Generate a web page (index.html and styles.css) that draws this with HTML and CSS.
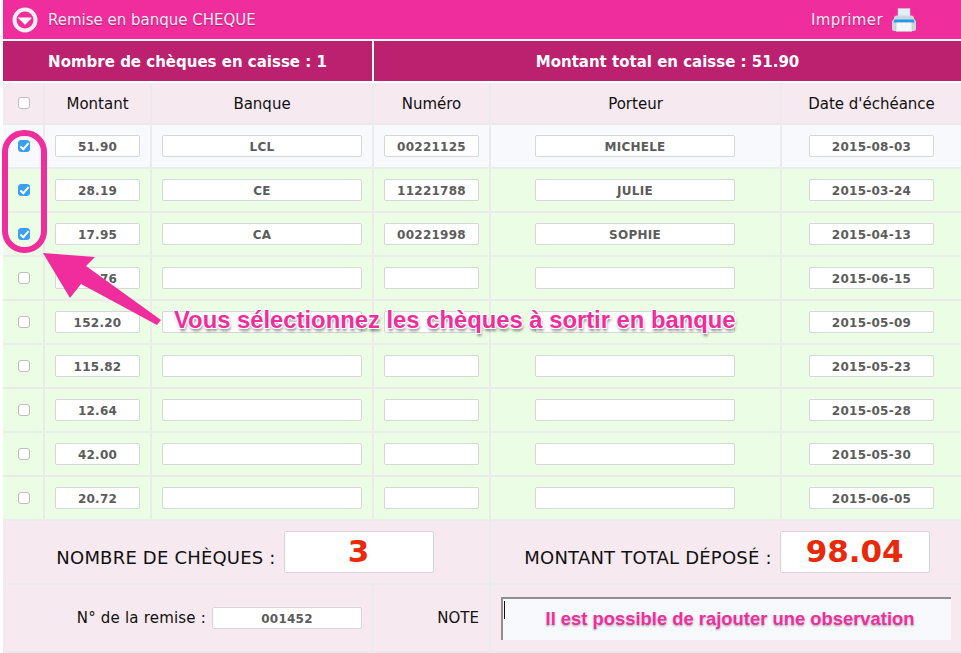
FILE: index.html
```html
<!DOCTYPE html>
<html lang="fr">
<head>
<meta charset="utf-8">
<title>Remise en banque CHEQUE</title>
<link rel="stylesheet" href="styles.css">
</head>
<body>
<div class="page">
  <header class="topbar">
    <div class="title-group">
      <svg class="round-icon" width="26" height="26" viewBox="0 0 26 26"><circle cx="13" cy="13" r="10.5" fill="#f02d9c" stroke="#f6eef2" stroke-width="4"/><path d="M7 10.5h12a.6.6 0 0 1 .4 1l-6 6a.6.6 0 0 1-.8 0l-6-6a.6.6 0 0 1-.4-1z" fill="#fff"/></svg>
      <span class="title">Remise en banque CHEQUE</span>
    </div>
    <div class="print-group">
      <span class="title print-label">Imprimer</span>
      <svg class="printer" width="26" height="26" viewBox="0 0 26 26">
        <path d="M7 1.500h12v10H7z" fill="#e4eef7" stroke="#b9c9d8" stroke-width=".6"/>
        <path d="M3 11.500q0-3 3-3h14q3 0 3 3l2 3v7q0 2.500-2.500 2.500h-19Q1 24 1 21.500v-7z" fill="#ccd6e0"/>
        <path d="M3.500 12.500h19l1 3h-21z" fill="#1e9bea"/>
        <path d="M5 15.500h16v9H5z" fill="#f4f7fa" stroke="#aebccb" stroke-width=".5"/>
      </svg>
    </div>
  </header>

  <div class="band">
    <div class="band-cell">Nombre de chèques en caisse : 1</div>
    <div class="band-cell">Montant total en caisse : 51.90</div>
  </div>

  <div class="sheet">
    <div class="cell head"><input class="check" type="checkbox"></div>
    <div class="cell head">Montant</div>
    <div class="cell head">Banque</div>
    <div class="cell head">Numéro</div>
    <div class="cell head">Porteur</div>
    <div class="cell head">Date d'échéance</div>

    <div class="cell first"><input class="check" type="checkbox" checked></div>
    <div class="cell first"><input class="field w85" readonly value="51.90"></div>
    <div class="cell first"><input class="field w200" readonly value="LCL"></div>
    <div class="cell first"><input class="field w95" readonly value="00221125"></div>
    <div class="cell first"><input class="field w200 porteur" readonly value="MICHELE"></div>
    <div class="cell first"><input class="field w125" readonly value="2015-08-03"></div>

    <div class="cell"><input class="check" type="checkbox" checked></div>
    <div class="cell"><input class="field w85" readonly value="28.19"></div>
    <div class="cell"><input class="field w200" readonly value="CE"></div>
    <div class="cell"><input class="field w95" readonly value="11221788"></div>
    <div class="cell"><input class="field w200 porteur" readonly value="JULIE"></div>
    <div class="cell"><input class="field w125" readonly value="2015-03-24"></div>

    <div class="cell"><input class="check" type="checkbox" checked></div>
    <div class="cell"><input class="field w85" readonly value="17.95"></div>
    <div class="cell"><input class="field w200" readonly value="CA"></div>
    <div class="cell"><input class="field w95" readonly value="00221998"></div>
    <div class="cell"><input class="field w200 porteur" readonly value="SOPHIE"></div>
    <div class="cell"><input class="field w125" readonly value="2015-04-13"></div>

    <div class="cell"><input class="check" type="checkbox"></div>
    <div class="cell"><input class="field w85" readonly value="24.76"></div>
    <div class="cell"><input class="field w200" readonly></div>
    <div class="cell"><input class="field w95" readonly></div>
    <div class="cell"><input class="field w200 porteur" readonly></div>
    <div class="cell"><input class="field w125" readonly value="2015-06-15"></div>

    <div class="cell"><input class="check" type="checkbox"></div>
    <div class="cell"><input class="field w85" readonly value="152.20"></div>
    <div class="cell"><input class="field w200" readonly></div>
    <div class="cell"><input class="field w95" readonly></div>
    <div class="cell"><input class="field w200 porteur" readonly></div>
    <div class="cell"><input class="field w125" readonly value="2015-05-09"></div>

    <div class="cell"><input class="check" type="checkbox"></div>
    <div class="cell"><input class="field w85" readonly value="115.82"></div>
    <div class="cell"><input class="field w200" readonly></div>
    <div class="cell"><input class="field w95" readonly></div>
    <div class="cell"><input class="field w200 porteur" readonly></div>
    <div class="cell"><input class="field w125" readonly value="2015-05-23"></div>

    <div class="cell"><input class="check" type="checkbox"></div>
    <div class="cell"><input class="field w85" readonly value="12.64"></div>
    <div class="cell"><input class="field w200" readonly></div>
    <div class="cell"><input class="field w95" readonly></div>
    <div class="cell"><input class="field w200 porteur" readonly></div>
    <div class="cell"><input class="field w125" readonly value="2015-05-28"></div>

    <div class="cell"><input class="check" type="checkbox"></div>
    <div class="cell"><input class="field w85" readonly value="42.00"></div>
    <div class="cell"><input class="field w200" readonly></div>
    <div class="cell"><input class="field w95" readonly></div>
    <div class="cell"><input class="field w200 porteur" readonly></div>
    <div class="cell"><input class="field w125" readonly value="2015-05-30"></div>

    <div class="cell"><input class="check" type="checkbox"></div>
    <div class="cell"><input class="field w85" readonly value="20.72"></div>
    <div class="cell"><input class="field w200" readonly></div>
    <div class="cell"><input class="field w95" readonly></div>
    <div class="cell"><input class="field w200 porteur" readonly></div>
    <div class="cell"><input class="field w125" readonly value="2015-06-05"></div>

    <div class="cell foot span-left">
      <span class="foot-label">NOMBRE DE CHÈQUES :</span>
      <input class="total" readonly value="3">
    </div>
    <div class="cell foot span-right">
      <span class="foot-label">MONTANT TOTAL DÉPOSÉ :</span>
      <input class="total" readonly value="98.04">
    </div>

    <div class="cell foot2 span-remise">
      <span class="small-label">N° de la remise :</span>
      <input class="field w150" readonly value="001452">
    </div>
    <div class="cell foot2 note-label"><span class="small-label note-word">NOTE</span></div>
    <div class="cell foot2 span-note">
      <div class="note">
        <span class="caret"></span>
        <span class="note-text">Il est possible de rajouter une observation</span>
      </div>
    </div>
  </div>

  <div class="ring"></div>
  <svg class="arrow" width="125" height="80" viewBox="0 0 125 80">
    <path d="M1 1 L53 5 L44 14 L119 68 L115 73 L39 32 L28 46 Z" fill="#f02d9c"/>
  </svg>
  <div class="callout">Vous sélectionnez les chèques à sortir en banque</div>
</div>
</body>
</html>
```
FILE: styles.css
```css
* { box-sizing: border-box; }
html, body { margin: 0; padding: 0; background: #fff; }
body { font-family: "DejaVu Sans", Verdana, sans-serif; color: #111; }

.page { position: relative; width: 961px; height: 653px; padding-left: 3px; overflow: hidden; }

.topbar {
  height: 39px;
  background: #f02d9c;
  display: flex;
  align-items: center;
  justify-content: space-between;
  padding: 0 44px 0 9px;
  margin-bottom: 2px;
}
.title-group, .print-group { display: flex; align-items: center; }
.title-group { gap: 10px; }
.print-group { gap: 8px; }
.title { color: #fbeaf3; font-size: 15px; text-shadow: 0 1px 1px rgba(120, 20, 80, .6); }
.print-label { letter-spacing: .4px; }

.band {
  display: grid;
  grid-template-columns: 369px 1fr;
  gap: 2px;
  margin-bottom: 2px;
}
.band-cell {
  height: 40px;
  padding-top: 1px;
  background: #bb216e;
  color: #fff;
  font-weight: 700;
  font-size: 15px;
  display: flex;
  align-items: center;
  justify-content: center;
}

.sheet {
  display: grid;
  grid-template-columns: 40px 105px 220px 115px 289px 179px;
  grid-template-rows: 40px repeat(9, 42px) 62px 66px;
  gap: 2px;
  background: #ebebeb;
  padding-bottom: 2px;
}
.cell {
  background: #ebfde4;
  display: flex;
  align-items: center;
  justify-content: center;
}
.head { background: #f6e9f0; font-size: 15px; padding-top: 1px; }
.first { background: #f7f9fd; }

.check {
  appearance: none;
  -webkit-appearance: none;
  position: relative;
  width: 12px;
  height: 12px;
  margin: 0 0 0 2px;
  background: #fff;
  border: 1px solid #bdbdbd;
  border-radius: 3px;
}
.head .check { margin-bottom: 1px; }
.check:checked { background: #3c9ef5; border-color: #3c9ef5; }
.check:checked::after {
  content: "";
  position: absolute;
  left: 3px;
  top: 0;
  width: 3px;
  height: 7px;
  border: solid #fff;
  border-width: 0 2px 2px 0;
  transform: rotate(42deg);
}

.field {
  height: 22px;
  padding: 1px 0 0;
  background: #fff;
  border: 1px solid #d6d6d6;
  border-radius: 2px;
  text-align: center;
  font: 700 12px "DejaVu Sans", Verdana, sans-serif;
  letter-spacing: .25px;
  color: #5c5c5c;
  outline: none;
}
.w85 { width: 85px; }
.w95 { width: 95px; }
.w125 { width: 125px; }
.w150 { width: 150px; }
.w200 { width: 200px; }
.porteur { margin-right: 1px; }

.foot, .foot2 { background: #f6e9f0; }
.foot { gap: 8px; }
.span-left { grid-column: 1 / 5; padding-right: 2px; }
.span-right { grid-column: 5 / 7; padding-left: 2px; }
.span-remise { grid-column: 1 / 4; justify-content: flex-end; padding-right: 10px; gap: 6px; }
.note-label { justify-content: flex-end; padding-right: 10px; }
.span-note { grid-column: 5 / 7; }

.foot-label { font-size: 18px; letter-spacing: .2px; color: #111; padding-top: 11px; }
.small-label { font-size: 15px; letter-spacing: .2px; color: #111; }
.note-word { letter-spacing: 0; }

.total {
  width: 150px;
  height: 42px;
  padding: 0 0 3px;
  background: #fff;
  border: 1px solid #d6d6d6;
  border-radius: 2px;
  text-align: center;
  font: 700 31px "DejaVu Sans", Verdana, sans-serif;
  color: #e8290a;
  outline: none;
}

.note {
  position: relative;
  width: 450px;
  height: 43px;
  background: #f7f9fd;
  border-top: 2px solid #8f8f8f;
  border-left: 2px solid #8f8f8f;
  display: flex;
  align-items: center;
  justify-content: center;
  padding: 0 0 1px 6px;
}
.caret {
  position: absolute;
  left: 1px;
  top: 2px;
  width: 1px;
  height: 18px;
  background: #111;
}
.note-text {
  font: 700 18.4px "Liberation Sans", Arial, sans-serif;
  color: #f02d9c;
  text-shadow: 0 0 2px #fff, 0 1px 2px rgba(0, 0, 0, .45);
}

.ring {
  position: absolute;
  left: 2px;
  top: 130px;
  width: 45px;
  height: 123px;
  border: 6px solid #f02d9c;
  border-radius: 22px;
}
.arrow { position: absolute; left: 42px; top: 252px; }
.callout {
  position: absolute;
  left: 174px;
  top: 306px;
  font: 700 23.8px "Liberation Sans", Arial, sans-serif;
  white-space: nowrap;
  color: #f02d9c;
  text-shadow: 1px 0 0 #fff, -1px 0 0 #fff, 0 1px 0 #fff, 0 -1px 0 #fff, 1px 1px 0 #fff, -1px -1px 0 #fff, 1px -1px 0 #fff, -1px 1px 0 #fff, 1px 3px 3px rgba(0, 0, 0, .5);
}
```
